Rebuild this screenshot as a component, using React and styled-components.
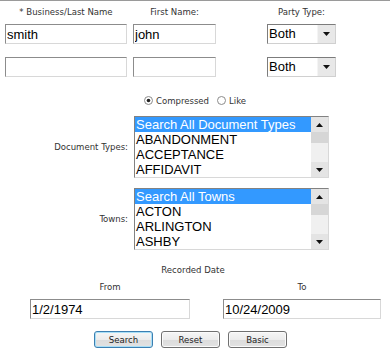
import React from 'react'
import styled, { createGlobalStyle } from 'styled-components'

const GlobalStyle = createGlobalStyle`
  html, body {
    margin: 0;
    padding: 0;
    background: #ffffff;
  }
  body {
    font-family: "DejaVu Sans Condensed", "Liberation Sans", sans-serif;
  }
`

const DOC_TYPES = ['Search All Document Types', 'ABANDONMENT', 'ACCEPTANCE', 'AFFIDAVIT']
const TOWNS = ['Search All Towns', 'ACTON', 'ARLINGTON', 'ASHBY']

const Arrow = ({ up }) => (
    <svg width="7" height="4" viewBox="0 0 7 4">
        <path d={up ? 'M0 4 L7 4 L3.5 0 Z' : 'M0 0 L7 0 L3.5 4 Z'} fill="#111" />
    </svg>
)

const RadioMark = ({ checked }) => (
    <svg width="9" height="9" viewBox="0 0 9 9">
        <circle cx="4.5" cy="4.5" r="4" fill="#fff" stroke="#8a8a8a" strokeWidth="1" />
        {checked && <circle cx="4.5" cy="4.5" r="1.8" fill="#222" />}
    </svg>
)

const PartySelect = () => (
    <SelectBox>
        <SelectValue>Both</SelectValue>
        <SelectButton><Arrow /></SelectButton>
    </SelectBox>
)

const ListBox = ({ items }) => (
    <ListFrame>
        <ListItems>
            {items.map((item, i) => (
                <ListItem key={item} selected={i === 0}>{item}</ListItem>
            ))}
        </ListItems>
        <ScrollBar>
            <ScrollButton><Arrow up /></ScrollButton>
            <ScrollThumb />
            <ScrollTrack />
            <ScrollButton><Arrow /></ScrollButton>
        </ScrollBar>
    </ListFrame>
)

const App = () => {
    return (
        <Page>
            <GlobalStyle />
            <NameRow>
                <Column width={122}>
                    <Label>* Business/Last Name</Label>
                    <TextInput defaultValue="smith" />
                    <TextInput defaultValue="" />
                </Column>
                <Column width={83} offset={6}>
                    <Label>First Name:</Label>
                    <TextInput defaultValue="john" />
                    <TextInput defaultValue="" />
                </Column>
                <Column width={69} offset={51}>
                    <Label>Party Type:</Label>
                    <PartySelect />
                    <PartySelect />
                </Column>
            </NameRow>

            <RadioRow>
                <RadioOption><RadioMark checked />Compressed</RadioOption>
                <RadioOption><RadioMark />Like</RadioOption>
            </RadioRow>

            <ListRow>
                <RowLabel>Document Types:</RowLabel>
                <ListBox items={DOC_TYPES} />
            </ListRow>
            <ListRow spaced>
                <RowLabel>Towns:</RowLabel>
                <ListBox items={TOWNS} />
            </ListRow>

            <DateSection>
                <Label>Recorded Date</Label>
                <DateGrid>
                    <DateColumn>
                        <Label>From</Label>
                        <TextInput defaultValue="1/2/1974" />
                    </DateColumn>
                    <DateColumn>
                        <Label>To</Label>
                        <TextInput defaultValue="10/24/2009" />
                    </DateColumn>
                </DateGrid>
            </DateSection>

            <ButtonRow>
                <Button primary>Search</Button>
                <Button>Reset</Button>
                <Button>Basic</Button>
            </ButtonRow>
        </Page>
    )
}

const Page = styled.div`
    width: 390px;
    height: 349px;
    box-sizing: border-box;
    border-top: 1px solid #9a9a9a;
    padding-top: 5px;
    overflow: hidden;
    background: #fff;
`
const Label = styled.div`
    font-size: 9.5px;
    line-height: 12px;
    color: #333;
    white-space: nowrap;
    text-align: center;
`
const NameRow = styled.div`
    display: flex;
    padding-left: 5px;
`
const Column = styled.div`
    display: flex;
    flex-direction: column;
    align-items: center;
    width: ${p => p.width}px;
    margin-left: ${p => p.offset || 0}px;

    & > :nth-child(2) {
        margin-top: 6px;
    }
    & > :nth-child(3) {
        margin-top: 13px;
    }
`
const TextInput = styled.input`
    display: block;
    width: 100%;
    height: 20px;
    box-sizing: border-box;
    margin: 0;
    padding: 0 1px;
    border: 1px solid;
    border-color: #8c8c8c #d8d8d8 #d8d8d8 #8c8c8c;
    font-family: "Liberation Sans", Arial, sans-serif;
    font-size: 13px;
    color: #000;
    background: #fff;
    outline: none;
`
const SelectBox = styled.div`
    display: flex;
    width: 100%;
    height: 20px;
    box-sizing: border-box;
    border: 1px solid;
    border-color: #7c7c7c #d0d0d0 #d0d0d0 #7c7c7c;
    background: #fff;
`
const SelectValue = styled.div`
    flex: 1;
    padding-left: 1px;
    font-family: "Liberation Sans", Arial, sans-serif;
    font-size: 13px;
    line-height: 18px;
    color: #000;
`
const SelectButton = styled.div`
    width: 17px;
    display: flex;
    align-items: center;
    justify-content: center;
    background: #e8e8e8;
    border-left: 1px solid #f4f4f4;
`
const RadioRow = styled.div`
    display: flex;
    justify-content: center;
    gap: 8px;
    margin-top: 16px;
    height: 14px;
    align-items: center;
`
const RadioOption = styled.div`
    display: flex;
    align-items: center;
    gap: 3px;
    font-size: 9.5px;
    color: #333;
`
const ListRow = styled.div`
    display: grid;
    grid-template-columns: 128px 195px;
    column-gap: 6px;
    align-items: center;
    margin-top: ${p => (p.spaced ? 10 : 9)}px;
`
const RowLabel = styled(Label)`
    text-align: right;
`
const ListFrame = styled.div`
    display: flex;
    height: 62px;
    box-sizing: border-box;
    border: 1px solid;
    border-color: #828282 #d8d8d8 #d8d8d8 #828282;
    background: #fff;
`
const ListItems = styled.div`
    flex: 1;
    display: flex;
    flex-direction: column;
`
const ListItem = styled.div`
    height: 15px;
    line-height: 15px;
    padding-left: 1px;
    font-family: "Liberation Sans", Arial, sans-serif;
    font-size: 13px;
    white-space: nowrap;
    color: ${p => (p.selected ? '#fff' : '#000')};
    background: ${p => (p.selected ? '#3399ff' : 'transparent')};
`
const ScrollBar = styled.div`
    width: 17px;
    display: flex;
    flex-direction: column;
    background: #f0f0f0;
`
const ScrollButton = styled.div`
    height: 15px;
    display: flex;
    align-items: center;
    justify-content: center;
    background: #e4e4e4;
`
const ScrollThumb = styled.div`
    height: 11px;
    background: #d6d6d6;
`
const ScrollTrack = styled.div`
    flex: 1;
`
const DateSection = styled.div`
    margin-top: 14px;
    padding-right: 4px;
`
const DateGrid = styled.div`
    display: grid;
    grid-template-columns: 160px 158px;
    column-gap: 33px;
    padding-left: 30px;
    margin-top: 5px;
`
const DateColumn = styled.div`
    display: flex;
    flex-direction: column;
    gap: 6px;
`
const ButtonRow = styled.div`
    display: flex;
    gap: 8px;
    padding-left: 94px;
    margin-top: 12px;
`
const Button = styled.button`
    width: 59px;
    height: 17px;
    padding: 0;
    box-sizing: border-box;
    border: 1px solid ${p => (p.primary ? '#3c7fb1' : '#707070')};
    border-radius: 3px;
    background: linear-gradient(#f6f6f6 0%, #ececec 50%, #dcdcdc 51%, #e2e2e2 100%);
    box-shadow: inset 0 0 0 1px ${p => (p.primary ? '#a8dff7' : '#fbfbfb')};
    font-family: "DejaVu Sans Condensed", "Liberation Sans", sans-serif;
    font-size: 9.5px;
    color: #222;
`

export default App
